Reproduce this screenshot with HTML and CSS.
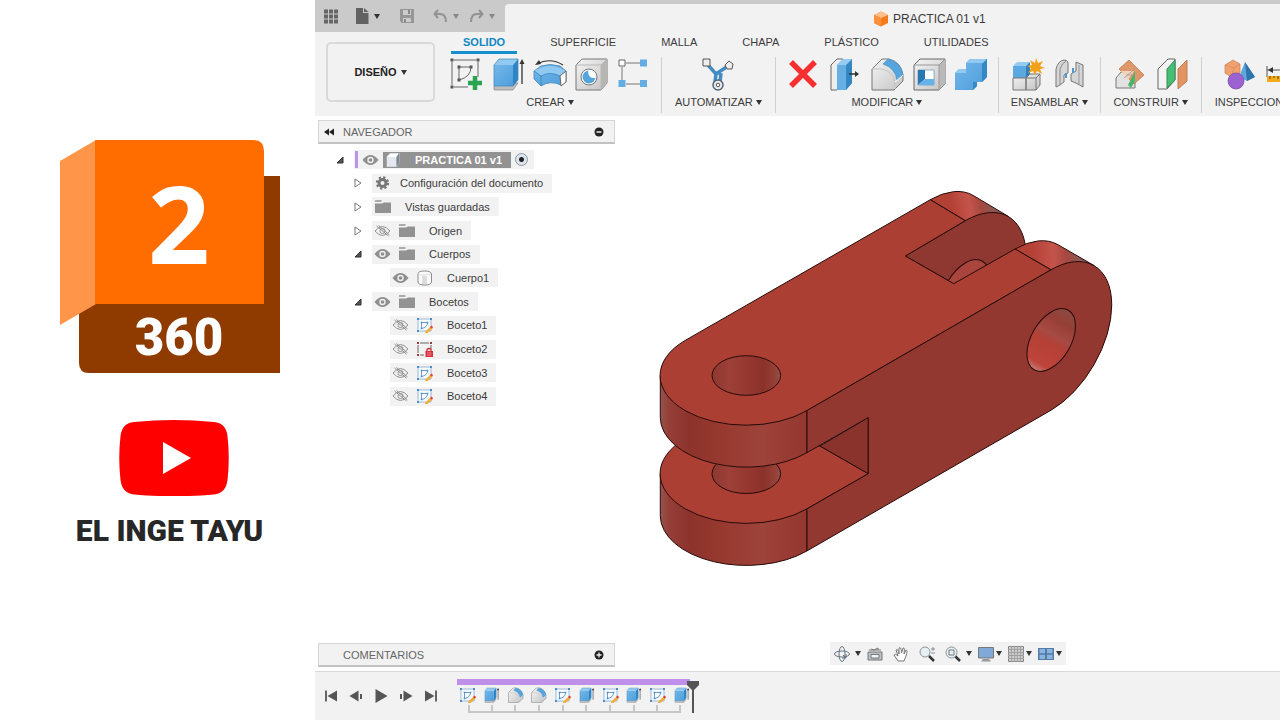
FILE: index.html
```html
<!DOCTYPE html>
<html lang="es">
<head>
<meta charset="utf-8">
<title>PRACTICA 01 v1</title>
<link rel="stylesheet" href="styles.css">
</head>
<body>
<svg class="defs" width="0" height="0" aria-hidden="true">
  <defs>
    <linearGradient id="blue" x1="0" y1="0" x2="1" y2="1"><stop offset="0" stop-color="#74b7ea"/><stop offset="1" stop-color="#4d9edb"/></linearGradient>
    <linearGradient id="grey" x1="0" y1="0" x2="1" y2="1"><stop offset="0" stop-color="#f4f4f4"/><stop offset="1" stop-color="#c4c4c4"/></linearGradient>
    <symbol id="eye" viewBox="0 0 16 16"><path d="M0 8Q8-2 16 8Q8 18 0 8Z" fill="#8f8f8f"/><circle cx="8" cy="8" r="3.2" fill="#efefef"/><circle cx="8" cy="8" r="1.8" fill="#8f8f8f"/></symbol>
    <symbol id="eye-off" viewBox="0 0 16 16"><path d="M.5 8Q8-1 15.500 8Q8 17 .5 8ZM2 3L14 13M4 2.500L15 12" fill="none" stroke="#929292"/><circle cx="8" cy="8" r="2.600" fill="none" stroke="#929292"/></symbol>
    <symbol id="folder" viewBox="0 0 17 16"><path d="M1 4.500H8L10 3.500H17V14H1Z" fill="#929292"/><path d="M1 2H7.500" stroke="#929292" stroke-width="1.500"/></symbol>
    <symbol id="gear" viewBox="0 0 16 16"><circle cx="8" cy="8" r="3.500" fill="none" stroke="#777" stroke-width="3"/><circle cx="8" cy="8" r="5.500" fill="none" stroke="#777" stroke-width="2.400" stroke-dasharray="2.200 2.120"/></symbol>
    <symbol id="sketch" viewBox="0 0 17 16"><path d="M2 2H15V14H2Z" fill="#f7fbff" stroke="#8aabc9" stroke-width=".8"/><path d="M5.500 5.500H11.500Q11.500 10.500 5.500 11.500Z" fill="none" stroke="#5f92bf" stroke-width=".9"/><path d="M1 1H3V3H1ZM14 1H16V3H14ZM1 13H3V15H1ZM4.700 4.700H6.300V6.300H4.700ZM10.700 4.700H12.300V6.300H10.700ZM4.700 10.700H6.300V12.300H4.700Z" fill="#438fcf"/><path d="M9.500 14.500L14.500 9.500L16.500 11.500L11.500 16L9 16Z" fill="#f2ae3b"/><path d="M14 10L15.500 8.500L17 10L16 11.700Z" fill="#d9403c"/></symbol>
    <symbol id="sketch-lock" viewBox="0 0 17 16"><path d="M4 2H13M15 4V8M2 4V12M4 14H8" fill="none" stroke="#666"/><path d="M1 1H3V3H1ZM14 1H16V3H14ZM1 13H3V15H1Z" fill="#9c3838"/><path d="M11 10V8.500Q13 6.500 15 8.500V10" fill="none" stroke="#c62f35" stroke-width="1.300"/><path d="M9.500 10H17V16H9.500Z" fill="#db303b"/><path d="M11 12H15.500M11 14H15.500" stroke="#f4a0a5" stroke-width=".7"/></symbol>
    <symbol id="body" viewBox="0 0 17 16"><path d="M2 4Q2 1 8.500 1Q15 1 15.500 4V12Q15 15 9 15Q2 15 2 12Z" fill="#fafafa" stroke="#8c8c8c"/><path d="M6 6H11V14H6Z" fill="#dcdcdc"/><path d="M2 4Q5 6 15 4" fill="none" stroke="#ddd"/></symbol>
    <symbol id="component" viewBox="0 0 16 16"><path d="M1 4.500L4.500 1H14V11L11 15H1Z" fill="#b9c2cc"/><path d="M1.500 5L4.500 1.500H13L11 5Z" fill="#fff"/><path d="M1.500 5H11V14.500H1.500Z" fill="#e3e9ef"/><path d="M11 5L13.500 1.500V11L11 14.500Z" fill="#7e8791"/></symbol>
    <symbol id="extrude" viewBox="0 0 34 34"><path d="M3 29L8 24L27 26L22 33H3Z" fill="#bdbdbd" stroke="#888" stroke-width=".7"/><path d="M3 8L8 2H27L22 8Z" fill="#91c9f1"/><path d="M3 8H22V29H3Z" fill="url(#blue)"/><path d="M22 8L27 2V23L22 29Z" fill="#2e85c4"/><path d="M3 8L8 2H27V23L22 29H3Z" fill="none" stroke="#3b86bd" stroke-width=".7"/><path d="M31 27V5" stroke="#333" stroke-width="1.300"/><path d="M28.500 7L31 2L33.500 7Z" fill="#333"/></symbol>
    <symbol id="fillet" viewBox="0 0 34 34"><path d="M2 12L12 2H19Q31 5 33 18V24L24 33H2Z" fill="url(#grey)" stroke="#777"/><path d="M2 12H11Q23 14 25 25V32" fill="none" stroke="#c4c4c4"/><path d="M13 7L18 2Q31 5 33 18L27 23Q25 11 13 7Z" fill="#55a5df" stroke="#438bc0" stroke-width=".6"/><path d="M25 25L33 18" stroke="#fff"/></symbol>
    <symbol id="closed" viewBox="0 0 10 12"><path d="M2 2V10L8 6Z" fill="#fff" stroke="#777"/></symbol>
    <symbol id="open" viewBox="0 0 10 12"><path d="M2 9L8 3V9Z" fill="#555" stroke="#333"/></symbol>
  </defs>
</svg>

<aside class="brand">
  <svg class="logo" viewBox="0 0 222 236" role="img" aria-label="2 360">
    <path d="M20 37H221V234H30Q20 234 20 224Z" fill="#8f3b00"/>
    <path d="M1 22L37 1V165L1 186Z" fill="#ff9548"/>
    <path d="M36 1H194Q205 1 205 12V165H36Z" fill="#ff6c00"/>
    <text class="logo-number" x="120" y="125" text-anchor="middle">2</text>
    <text class="logo-suffix" x="120" y="216" text-anchor="middle">360</text>
  </svg>
  <svg class="play-logo" viewBox="0 0 110 76" role="img" aria-label="Video">
    <path d="M15 2Q55-2 95 2Q107 3 108.500 16Q111 38 108.500 60Q107 73 95 74.500Q55 78 15 74.500Q3 73 1.500 60Q-1 38 1.500 16Q3 3 15 2Z" fill="#fe0000"/>
    <path d="M44 22L72 38L44 54Z" fill="#fff"/>
  </svg>
  <h1 class="channel">EL INGE TAYU</h1>
</aside>

<main class="app">
  <header class="topbar">
    <div class="quick">
      <button class="plain" aria-label="Panel de datos"><svg width="16" height="16" viewBox="0 0 16 16"><path d="M1 3.500H15M1 8.500H15M1 13.500H15" stroke="#666" stroke-width="4" stroke-dasharray="4 1"/></svg></button>
      <button class="plain with-caret file" aria-label="Archivo"><svg width="14" height="16" viewBox="0 0 14 16"><path d="M1 0H8V5H13.500V16H1ZM9 0L13.500 4H9Z" fill="#626262"/></svg><i class="caret"></i></button>
      <button class="plain save" aria-label="Guardar"><svg width="16" height="16" viewBox="0 0 16 16"><path d="M1 1H15V15H3L1 13Z" fill="#969696"/><path d="M4 2H12V7H4ZM4 10H12V14H4Z" fill="#ccc"/><path d="M9 2H11V6H9ZM5 11H7V14H5Z" fill="#888"/></svg></button>
      <button class="plain with-caret undo" aria-label="Deshacer"><svg width="15" height="16" viewBox="0 0 15 16"><path d="M5 2L1.500 6L5 10M2 6H7Q13 6 13 14" fill="none" stroke="#929292" stroke-width="2"/></svg><i class="caret dim"></i></button>
      <button class="plain with-caret" aria-label="Rehacer"><svg width="15" height="16" viewBox="0 0 15 16"><path d="M10 2L13.500 6L10 10M13 6H8Q2 6 2 14" fill="none" stroke="#929292" stroke-width="2"/></svg><i class="caret dim"></i></button>
    </div>
    <div class="doc-tab">
      <svg width="16" height="16" viewBox="0 0 16 16"><path d="M1 4L8 .5L15 4V12L8 15.500L1 12Z" fill="#f57a1c"/><path d="M1 4L8 .5L15 4L8 7Z" fill="#ffc08a"/><path d="M1 4L8 7V15.500L1 12Z" fill="#fb903d"/></svg>
      <span>PRACTICA 01 v1</span>
    </div>
  </header>

  <section class="ribbon">
    <button class="switcher">DISEÑO<i class="caret"></i></button>
    <div class="ribbon-main">
      <nav class="tabs">
        <button class="tab active">SOLIDO</button><button class="tab">SUPERFICIE</button><button class="tab">MALLA</button><button class="tab">CHAPA</button><button class="tab">PLÁSTICO</button><button class="tab">UTILIDADES</button>
      </nav>
      <div class="groups">
        <div class="group">
          <div class="tools">
            <button class="tool" aria-label="Crear boceto"><svg viewBox="0 0 34 34"><path d="M5 3H27M29 5V20M3 5V28M5 30H19" fill="none" stroke="#666"/><path d="M10 10H22Q22 20 10 23Z" fill="none" stroke="#666"/><path d="M1.500 1.500H4.500V4.500H1.500ZM27.500 1.500H30.500V4.500H27.500ZM1.500 28.500H4.500V31.500H1.500ZM8.500 8.500H11.500V11.500H8.500ZM20.500 8.500H23.500V11.500H20.500ZM8.500 21.500H11.500V24.500H8.500Z" fill="#555"/><path d="M26 19V33M19 26H33" stroke="#27a550" stroke-width="4.500"/></svg></button>
            <button class="tool" aria-label="Extruir"><svg><use href="#extrude"/></svg></button>
            <button class="tool" aria-label="Revolución"><svg viewBox="0 0 34 34"><path d="M1 14L8 9Q17 6 27 9L33 14V25L28 28Q17 23 8 29L1 22Z" fill="url(#blue)" stroke="#4587b8" stroke-width=".8"/><path d="M1 14L8 19Q17 14 27 19L33 14Q17 4 1 14Z" fill="#8fc8f0"/><path d="M8 19V29M1 14L8 19Q17 14 27 19" fill="none" stroke="#3984bd" stroke-width=".8"/><path d="M27 19L33 14V25L28 29Z" fill="#fff" stroke="#666"/><path d="M4 7Q17 0 30 8" fill="none" stroke="#333" stroke-width="1.200"/><path d="M2 8L6 3L8 7Z" fill="#333"/></svg></button>
            <button class="tool" aria-label="Agujero"><svg viewBox="0 0 34 34"><path d="M1 8L7 2H32V26L26 33H1Z" fill="url(#grey)" stroke="#777"/><path d="M26 8L32 2V26L26 33Z" fill="#b7b5b3"/><path d="M1 8H26V33M26 8L32 2" fill="none" stroke="#b8b8b8"/><circle cx="14" cy="20" r="8" fill="#fff" stroke="#777"/><circle cx="14" cy="20" r="6.500" fill="#55a4dc"/><path d="M13 13.500A6.500 6.500 0 0 1 20.500 21Q13 22 13 13.500Z" fill="#fff"/></svg></button>
            <button class="tool" aria-label="Patrón"><svg viewBox="0 0 34 34"><path d="M9 6H23M9 27H23M5 10V23" fill="none" stroke="#777"/><path d="M2 3H8V9H2Z" fill="#fff" stroke="#666"/><path d="M23 2.500H30V9.500H23ZM1.500 23H8.500V30H1.500ZM23 23H30V30H23Z" fill="#64ade3"/></svg></button>
          </div>
          <button class="group-label">CREAR<i class="caret"></i></button>
        </div>
        <div class="group wide">
          <div class="tools">
            <button class="tool" aria-label="Automatizar"><svg viewBox="0 0 34 34"><path d="M7 8L15 17L27 9M15 17L14 25M20 16L19 25M14 16H20" fill="none" stroke="#438cc3" stroke-width="3.500"/><path d="M2 2H9V9H2ZM24 8L28 4L32 7L31 12L26 12Z" fill="#eee" stroke="#555"/><circle cx="17" cy="28" r="5" fill="#eee" stroke="#526779" stroke-width="1.500"/><circle cx="17" cy="28" r="1.800" fill="#fff" stroke="#555"/></svg></button>
          </div>
          <button class="group-label">AUTOMATIZAR<i class="caret"></i></button>
        </div>
        <div class="group">
          <div class="tools">
            <button class="tool" aria-label="Suprimir"><svg viewBox="0 0 34 34"><path d="M5 5L29 29M29 5L5 29" stroke="#f62f31" stroke-width="5.500"/></svg></button>
            <button class="tool" aria-label="Pulsar o tirar"><svg viewBox="0 0 34 34"><path d="M3 8L9 2H15V27L9 33H3Z" fill="#eee" stroke="#666"/><path d="M9 8L15 2H24V26L18 33H9Z" fill="#65afe4"/><path d="M18 8L24 2V26L18 33Z" fill="#3487c1"/><path d="M9 8L15 2H24L18 8Z" fill="#96ccf1"/><path d="M21 17H30" stroke="#333" stroke-width="1.500"/><path d="M27 14L31 17L27 20Z" fill="#333"/></svg></button>
            <button class="tool" aria-label="Empalme"><svg><use href="#fillet"/></svg></button>
            <button class="tool" aria-label="Vaciado"><svg viewBox="0 0 34 34"><path d="M2 8L8 2H33V27L27 33H2Z" fill="url(#grey)" stroke="#666"/><path d="M27 8L33 2V27L27 33Z" fill="#b9b9b9"/><path d="M2 8H27V33M27 8L33 2" fill="none" stroke="#999"/><path d="M6 13H22V28H6Z" fill="#fff" stroke="#5088ad" stroke-width=".6"/><path d="M6 13H13V22L6 28Z" fill="#2877b1"/><path d="M6 28L13 22H22V28Z" fill="#65b3ea"/></svg></button>
            <button class="tool" aria-label="Combinar"><svg viewBox="0 0 34 34"><path d="M1 16L5 12H12V6L16 2H33V20L28 25H23V29L19 33H1Z" fill="url(#blue)"/><path d="M12 6L16 2H33L29 6ZM1 16L5 12H12V16Z" fill="#91caf1"/><path d="M29 6L33 2V20L28 25V7ZM19 25H23V29L19 33Z" fill="#3488c5"/></svg></button>
          </div>
          <button class="group-label">MODIFICAR<i class="caret"></i></button>
        </div>
        <div class="group mid">
          <div class="tools">
            <button class="tool" aria-label="Nuevo componente"><svg viewBox="0 0 34 34"><path d="M2 9L6 5H19L15 9Z" fill="#93cdf3"/><path d="M2 9H15V21H2Z" fill="#5ba9e0"/><path d="M15 9L19 5V17L15 21Z" fill="#2d80bd"/><path d="M2 21H15V33H2ZM15 21L19 17H29V28L25 33H15Z" fill="url(#grey)" stroke="#777"/><path d="M15 21H25V33M25 21L29 17" fill="none" stroke="#777"/><path d="M25 1L27 6L32 4L29 9L34 11L29 12L31 17L26 14L24 18L22 14L17 16L20 11L16 9L21 8L19 3L24 6Z" fill="#f3a11d"/></svg></button>
            <button class="tool" aria-label="Unión"><svg viewBox="0 0 34 34"><path d="M3 30V12Q5 4 11 3Q16 3 15 9V16L11 18V25L7 28Z" fill="#d6d6d6" stroke="#777"/><path d="M7 28V12Q9 6 13 4" fill="none" stroke="#888"/><path d="M18 17L23 14V5L30 8V30L23 26L18 24Z" fill="#d5d5d5" stroke="#777"/><path d="M26 8V27" stroke="#999"/><path d="M13 16V21M20 11V16" stroke="#4a9bd6" stroke-width="2"/></svg></button>
          </div>
          <button class="group-label">ENSAMBLAR<i class="caret"></i></button>
        </div>
        <div class="group mid">
          <div class="tools">
            <button class="tool" aria-label="Plano de desfase"><svg viewBox="0 0 34 34"><path d="M3 21L8 15H17L22 21V31H3Z" fill="#e2e2e2" stroke="#777"/><path d="M16 3L31 18L21 27L6 12Z" fill="#df986a" stroke="#c57847" stroke-width=".8"/><path d="M8 14H21L15 23Z" fill="#f4d3bc"/><path d="M15 28L22 14V24L18 31Z" fill="#48b66f"/><path d="M14 18H22M11 21L23 11" stroke="#999" stroke-width=".8"/></svg></button>
            <button class="tool" aria-label="Plano medio"><svg viewBox="0 0 34 34"><path d="M3 12L13 2H20V23L12 32H3Z" fill="#f3f3f3" stroke="#666"/><path d="M12 12L20 3V23L12 31Z" fill="#45bf73" stroke="#348b57"/><path d="M23 12L32 3V24L23 32Z" fill="#e49460" stroke="#b97e5b"/></svg></button>
          </div>
          <button class="group-label">CONSTRUIR<i class="caret"></i></button>
        </div>
        <div class="group wide last">
          <div class="tools">
            <button class="tool" aria-label="Inspeccionar"><svg viewBox="0 0 34 34"><path d="M2 8L10 3L17 7V16L8 20L2 16Z" fill="#f0a16e" stroke="#cb8056" stroke-width=".7"/><path d="M2 8L11 11L17 7M11 11L8 20" fill="none" stroke="#d18a61" stroke-width=".7"/><path d="M22 5L32 20L24 24L16 20Z" fill="#60a8dc"/><path d="M22 5L32 20L24 24Z" fill="#2f75ac"/><circle cx="13" cy="24" r="8" fill="#9d62d2" stroke="#7549a0" stroke-width=".7"/></svg></button>
            <button class="tool" aria-label="Medir"><svg viewBox="0 0 34 34"><path d="M2 9V20M2 13H30" stroke="#555" fill="none"/><path d="M3 13L8 10V16Z" fill="#333"/><path d="M2 19H33V25H2Z" fill="#f3ab1a"/><path d="M5 19V22M9 19V21M13 19V22M17 19V21" stroke="#59400c"/></svg></button>
          </div>
          <button class="group-label">INSPECCIONAR<i class="caret"></i></button>
        </div>
      </div>
    </div>
  </section>

  <section class="workspace">
    <div class="side">
      <div class="panel-head">
        <button class="plain" aria-label="Contraer"><svg width="12" height="10" viewBox="0 0 12 10"><path d="M6 1.500V8.500L1 5ZM11 1.500V8.500L6 5Z" fill="#222"/></svg></button>
        <h2>NAVEGADOR</h2>
        <button class="plain" aria-label="Ocultar"><svg width="10" height="10" viewBox="0 0 10 10"><circle cx="5" cy="5" r="4.500" fill="#222"/><path d="M2.500 5H7.500" stroke="#eee" stroke-width="1.500"/></svg></button>
      </div>
      <ul class="tree">
        <li class="row root"><svg class="twist"><use href="#open"/></svg><span class="pill"><i class="bar"></i><svg class="ic"><use href="#eye"/></svg><b class="selected"><svg class="ic"><use href="#component"/></svg>PRACTICA 01 v1</b><input type="radio" checked aria-label="Activar PRACTICA 01 v1"></span></li>
        <li class="row"><svg class="twist"><use href="#closed"/></svg><span class="pill"><svg class="ic"><use href="#gear"/></svg><span class="setting">Configuración del documento</span></span></li>
        <li class="row"><svg class="twist"><use href="#closed"/></svg><span class="pill"><svg class="ic"><use href="#folder"/></svg><span class="name">Vistas guardadas</span></span></li>
        <li class="row"><svg class="twist"><use href="#closed"/></svg><span class="pill"><svg class="ic"><use href="#eye-off"/></svg><svg class="ic"><use href="#folder"/></svg><span class="name">Origen</span></span></li>
        <li class="row"><svg class="twist"><use href="#open"/></svg><span class="pill"><svg class="ic"><use href="#eye"/></svg><svg class="ic"><use href="#folder"/></svg><span class="name">Cuerpos</span></span></li>
        <li class="row child"><span class="pill"><svg class="ic"><use href="#eye"/></svg><svg class="ic"><use href="#body"/></svg><span class="name">Cuerpo1</span></span></li>
        <li class="row"><svg class="twist"><use href="#open"/></svg><span class="pill"><svg class="ic"><use href="#eye"/></svg><svg class="ic"><use href="#folder"/></svg><span class="name">Bocetos</span></span></li>
        <li class="row child"><span class="pill"><svg class="ic"><use href="#eye-off"/></svg><svg class="ic"><use href="#sketch"/></svg><span class="name">Boceto1</span></span></li>
        <li class="row child"><span class="pill"><svg class="ic"><use href="#eye-off"/></svg><svg class="ic"><use href="#sketch-lock"/></svg><span class="name">Boceto2</span></span></li>
        <li class="row child"><span class="pill"><svg class="ic"><use href="#eye-off"/></svg><svg class="ic"><use href="#sketch"/></svg><span class="name">Boceto3</span></span></li>
        <li class="row child"><span class="pill"><svg class="ic"><use href="#eye-off"/></svg><svg class="ic"><use href="#sketch"/></svg><span class="name">Boceto4</span></span></li>
      </ul>
      <div class="panel-head comments">
        <h2>COMENTARIOS</h2>
        <button class="plain" aria-label="Mostrar comentarios"><svg width="10" height="10" viewBox="0 0 10 10"><circle cx="5" cy="5" r="4.500" fill="#222"/><path d="M2.500 5H7.500M5 2.500V7.500" stroke="#eee" stroke-width="1.300"/></svg></button>
      </div>
    </div>

    <div class="viewport">
      <svg class="model" viewBox="656 186 460 384" role="img" aria-label="Modelo 3D">
        <defs>
          <linearGradient id="round" x1="660" y1="0" x2="807" y2="0" gradientUnits="userSpaceOnUse"><stop offset="0" stop-color="#93564f"/><stop offset=".06" stop-color="#953f38"/><stop offset=".2" stop-color="#8c332c"/><stop offset=".42" stop-color="#97392f"/><stop offset=".7" stop-color="#9e433b"/><stop offset=".85" stop-color="#993c34"/><stop offset="1" stop-color="#93372f"/></linearGradient>
          <linearGradient id="bore" x1="712" y1="0" x2="781" y2="0" gradientUnits="userSpaceOnUse"><stop offset="0" stop-color="#8d3730"/><stop offset=".25" stop-color="#9d4038"/><stop offset=".5" stop-color="#963830"/><stop offset=".75" stop-color="#8b322b"/><stop offset=".93" stop-color="#964239"/><stop offset="1" stop-color="#8c5a53"/></linearGradient>
          <linearGradient id="earBack" x1="953" y1="213" x2="991" y2="206" gradientUnits="userSpaceOnUse"><stop offset="0" stop-color="#b44136"/><stop offset=".45" stop-color="#c4544b"/><stop offset=".75" stop-color="#a64740"/><stop offset="1" stop-color="#8d5852"/></linearGradient>
          <linearGradient id="earFront" x1="1033" y1="259" x2="1078" y2="256" gradientUnits="userSpaceOnUse"><stop offset="0" stop-color="#b44136"/><stop offset=".45" stop-color="#c4544b"/><stop offset=".75" stop-color="#a64740"/><stop offset="1" stop-color="#8d5852"/></linearGradient>
          <linearGradient id="sideBore" x1="1" y1="0" x2="0" y2="0"><stop offset="0" stop-color="#8b4a43"/><stop offset=".2" stop-color="#963f37"/><stop offset=".42" stop-color="#a64a43"/><stop offset=".55" stop-color="#b44036"/><stop offset=".88" stop-color="#be443a"/><stop offset="1" stop-color="#c57b73"/></linearGradient>
          <clipPath id="underPlate"><path d="M650 417.500H660A86 49.700 0 0 0 832 417.500H850V560H650Z"/></clipPath>
          <clipPath id="innerEar"><path d="M905 256L953.700 283.700L1015 249V200H905Z"/></clipPath>
        </defs>
        <g stroke="#260b09" stroke-width="1" stroke-linejoin="round">
          <path d="M660.300 473.700V515.700A86 49.700 0 0 0 807 550.900V508.800L746 440Z" fill="url(#round)"/>
          <path d="M868.300 473.700L807 508.800A85 49.100 0 1 1 685.200 438.600L820 446Z" fill="#ac3f34"/>
          <g clip-path="url(#underPlate)"><ellipse cx="746.300" cy="473.700" rx="34.300" ry="19.800" fill="url(#bore)"/></g>
          <path d="M868.300 417.500V473.700L820 446Z" fill="#8a332c"/>
          <path d="M660.300 375.500V417.500A86 49.700 0 0 0 807 452.600V410.600L746 375Z" fill="url(#round)"/>
          <path d="M930.300 199.700A86 49.700 -60 0 1 973.300 195.500L1008.300 216.400L1000 235L965.300 220.700Z" fill="url(#earBack)"/>
          <path d="M905.300 256L965.300 220.700A86 49.700 -60 0 1 1026.100 255.900L1015 262L953.700 283.700Z" fill="#8f3831"/>
          <g clip-path="url(#innerEar)"><ellipse cx="965.300" cy="291" rx="34.300" ry="19.800" transform="rotate(-60 965.300 291)" fill="#a9453c"/></g>
          <path d="M1015 249A86 49.700 -60 0 1 1058 244.700L1094 265.500L1080 280L1051 269.800Z" fill="url(#earFront)"/>
          <path d="M685.200 340.400L930.300 199.700L965.300 220.700L905.300 256L953.700 283.700L1015 249L1051 269.800L807 410.600A85 49.100 0 1 1 685.200 340.400Z" fill="#ac3f34"/>
          <path d="M807 410.600L1051 269.800A85 49.100 -60 0 1 1051 410.200L807 550.900V508.800L868.300 473.700V417.500L807 452.600Z" fill="#933830"/>
          <ellipse cx="746.300" cy="375.500" rx="34.300" ry="19.800" fill="url(#bore)"/>
          <ellipse cx="1051.200" cy="340" rx="34.300" ry="19.800" transform="rotate(-60 1051.200 340)" fill="url(#sideBore)"/>
        </g>
      </svg>
      <div class="navbar">
        <button class="plain with-caret far" aria-label="Orbitar"><svg width="16" height="16" viewBox="0 0 16 16"><g fill="none" stroke="#687684"><ellipse cx="8" cy="8" rx="7.500" ry="3"/><ellipse cx="8" cy="8" rx="3" ry="7.500"/><path d="M9 9L12 12M12 8V12H8"/></g></svg><i class="caret"></i></button>
        <button class="plain" aria-label="Mirar a"><svg width="16" height="16" viewBox="0 0 16 16"><path d="M1 6H15V14H1Z" fill="#bbc2c8" stroke="#777"/><path d="M4 8.500H12V12H4Z" fill="#f5f5f5" stroke="#777"/><path d="M2 4H14M4 3L7 4L11 2V4" fill="none" stroke="#777"/></svg></button>
        <button class="plain" aria-label="Encuadre"><svg width="16" height="16" viewBox="0 0 16 16"><path d="M5 15L1 9Q2 7 5 10L3 4Q5 2 6 8L6 2Q8 0 8.500 7L10 2Q12 1 11 8L13 4Q15 4 13 10L11 15Z" fill="#fff" stroke="#777"/></svg></button>
        <button class="plain" aria-label="Zoom"><svg width="16" height="16" viewBox="0 0 16 16"><circle cx="6" cy="6" r="5" fill="#e8f0f4" stroke="#87939b"/><path d="M10 10L15 15" stroke="#333" stroke-width="2.500"/><path d="M12 3H16M14 1V5M12 7H16" stroke="#777" stroke-width=".8"/></svg></button>
        <button class="plain with-caret far" aria-label="Ajustar"><svg width="16" height="16" viewBox="0 0 16 16"><circle cx="6.500" cy="6.500" r="5.500" fill="#e8f0f4" stroke="#87939b"/><path d="M4 4H9V9H4Z" fill="none" stroke="#777"/><path d="M10.500 10.500L15 15" stroke="#333" stroke-width="2.500"/></svg><i class="caret"></i></button>
        <button class="plain with-caret" aria-label="Visualización"><svg width="16" height="16" viewBox="0 0 16 16"><path d="M.5 1.500H15.500V12H.5Z" fill="#7fa9d6" stroke="#777"/><path d="M5 13H11L13 15.500H3Z" fill="#999"/></svg><i class="caret"></i></button>
        <button class="plain with-caret" aria-label="Rejilla"><svg width="16" height="16" viewBox="0 0 16 16"><path d="M.5 .5H15.500V15.500H.5Z" fill="#ccc" stroke="#888"/><path d="M3.500 0V16M6.500 0V16M9.500 0V16M12.500 0V16M0 3.500H16M0 6.500H16M0 9.500H16M0 12.500H16" stroke="#a2a2a2"/></svg><i class="caret"></i></button>
        <button class="plain with-caret" aria-label="Ventanas gráficas"><svg width="16" height="16" viewBox="0 0 16 16"><path d="M0 2H16V14H0Z" fill="#557aa3"/><path d="M1.500 3H7V7.300H1.500ZM9 3H14.500V7.300H9ZM1.500 8.800H7V13H1.500ZM9 8.800H14.500V13H9Z" fill="#88b4df"/></svg><i class="caret"></i></button>
      </div>
    </div>
  </section>

  <footer class="timeline">
    <div class="playback">
      <button class="plain" aria-label="Inicio"><svg width="14" height="14" viewBox="0 0 14 14"><path d="M2 1.500V12.500" stroke="#555" stroke-width="1.800"/><path d="M13 1.500V12.500L3.500 7Z" fill="#555"/></svg></button>
      <button class="plain" aria-label="Anterior"><svg width="14" height="14" viewBox="0 0 14 14"><path d="M9.500 1.500V12.500L.5 7Z" fill="#555"/><path d="M12 5V10" stroke="#555" stroke-width="2"/></svg></button>
      <button class="plain" aria-label="Reproducir"><svg width="14" height="14" viewBox="0 0 14 14"><path d="M1.500 0V14L13.500 7Z" fill="#555"/></svg></button>
      <button class="plain" aria-label="Siguiente"><svg width="14" height="14" viewBox="0 0 14 14"><path d="M4.500 1.500V12.500L13.500 7Z" fill="#555"/><path d="M2 5V10" stroke="#555" stroke-width="2"/></svg></button>
      <button class="plain" aria-label="Final"><svg width="14" height="14" viewBox="0 0 14 14"><path d="M12 1.500V12.500" stroke="#555" stroke-width="1.800"/><path d="M1 1.500V12.500L10.500 7Z" fill="#555"/></svg></button>
    </div>
    <div class="track">
      <div class="span"></div>
      <div class="steps">
        <button class="step" aria-label="Boceto1"><svg><use href="#sketch"/></svg></button>
        <button class="step" aria-label="Extrusión1"><svg><use href="#extrude"/></svg></button>
        <button class="step" aria-label="Empalme1"><svg><use href="#fillet"/></svg></button>
        <button class="step" aria-label="Empalme2"><svg><use href="#fillet"/></svg></button>
        <button class="step" aria-label="Boceto2"><svg><use href="#sketch"/></svg></button>
        <button class="step" aria-label="Extrusión2"><svg><use href="#extrude"/></svg></button>
        <button class="step" aria-label="Boceto3"><svg><use href="#sketch"/></svg></button>
        <button class="step" aria-label="Extrusión3"><svg><use href="#extrude"/></svg></button>
        <button class="step" aria-label="Boceto4"><svg><use href="#sketch"/></svg></button>
        <button class="step" aria-label="Extrusión4"><svg><use href="#extrude"/></svg></button>
      </div>
      <svg class="marker" width="12" height="34" viewBox="0 0 12 34" aria-hidden="true"><path d="M0 1H12V5L7 10V33H5V10L0 5Z" fill="#555"/></svg>
    </div>
  </footer>
</main>
</body>
</html>
```
FILE: styles.css
```css
* { box-sizing: border-box; }
body {
  margin: 0;
  min-height: 100vh;
  display: flex;
  overflow: hidden;
  background: #fff;
  color: #3c3c3c;
  font: 11px/14px "Liberation Sans", Arial, sans-serif;
}
button {
  border: 0;
  padding: 0;
  background: none;
  color: inherit;
  font: inherit;
}
svg { display: block; flex: none; }
h1, h2 { margin: 0; font-weight: 400; }
.defs { position: absolute; }
.plain { display: flex; align-items: center; flex: none; }
.with-caret { gap: 5px; }
.caret {
  display: inline-block;
  flex: none;
  border: 3px solid transparent;
  border-top: 5px solid #333;
  border-bottom: 0;
}
.caret.dim { border-top-color: #888; }

/* Brand column */
.brand {
  flex: 0 0 315px;
  display: flex;
  flex-direction: column;
  align-items: center;
  padding: 139px 0 0 24px;
}
.logo { width: 222px; height: 236px; }
.logo-number { font: 700 108px "Open Sans", sans-serif; fill: #fff; }
.logo-suffix { font: 900 51px Roboto, sans-serif; fill: #fff; }
.play-logo { width: 110px; height: 76px; margin: 45px 0 0 8px; }
.channel {
  margin-top: 16px;
  color: #272727;
  font: 900 30px/38px Roboto, sans-serif;
  white-space: nowrap;
}

.app {
  flex: 1;
  min-width: 0;
  display: flex;
  flex-direction: column;
  overflow: hidden;
}

/* Title bar */
.topbar { display: flex; height: 32px; background: #cacaca; }
.quick {
  flex: 0 0 190px;
  display: flex;
  align-items: center;
  padding-left: 8px;
}
.file { margin-left: 16px; }
.save { margin-left: 19px; }
.undo { margin: 0 10px 0 18px; }
.doc-tab {
  flex: 1;
  display: flex;
  align-items: center;
  gap: 4px;
  margin-top: 4px;
  padding: 2px 0 0 368px;
  border-radius: 4px 0 0;
  background: #f2f2f2;
  font-size: 12px;
}

/* Ribbon */
.ribbon { display: flex; height: 84px; background: #f2f2f2; }
.switcher {
  flex: none;
  display: flex;
  align-items: center;
  justify-content: center;
  gap: 4px;
  width: 109px;
  height: 60px;
  margin: 10px 4px 0 11px;
  border: 2px solid #d9d9d9;
  border-radius: 5px;
  color: #222;
  font-weight: 700;
}
.ribbon-main { flex: none; }
.tabs { display: flex; gap: 21px; padding-left: 12px; }
.tab {
  height: 22px;
  padding: 0 12px;
  border-bottom: 3px solid transparent;
}
.tab.active { border-color: #1490cc; color: #1287c5; font-weight: 700; }
.groups { display: flex; padding-top: 3px; }
.group {
  padding: 0 10px;
  border-right: 1px solid #d0d0d0;
  text-align: center;
}
.group.wide { padding: 0 13px; }
.group.mid { padding: 0 12px; }
.group.last { border: 0; }
.tools { display: flex; justify-content: center; gap: 8px; }
.tool svg { width: 34px; height: 34px; }
.group-label {
  display: flex;
  align-items: center;
  gap: 3px;
  height: 22px;
  margin: 0 auto;
}

/* Workspace */
.workspace { flex: 1; display: flex; min-height: 0; }
.side {
  flex: 0 0 300px;
  display: flex;
  flex-direction: column;
  padding: 4px 0 4px 3px;
}
.panel-head {
  display: flex;
  align-items: center;
  gap: 8px;
  height: 24px;
  padding: 0 10px 0 4px;
  border: 1px solid #d5d5d5;
  border-bottom: 2px solid #c2c2c2;
  background: #f2f2f2;
}
.panel-head h2 { flex: 1; color: #666; font-size: 11px; }
.comments { margin-top: auto; padding-left: 24px; }
.tree {
  display: grid;
  align-content: space-between;
  height: 256px;
  margin: 6px 0 0;
  padding: 0;
  list-style: none;
}
.row { display: flex; align-items: center; padding-left: 35px; }
.row.root { padding-left: 17px; }
.row.child { padding-left: 72px; }
.twist { width: 10px; height: 12px; margin-right: 9px; }
.pill {
  display: flex;
  align-items: center;
  gap: 7px;
  height: 19px;
  padding: 0 9px 0 2px;
  background: #f2f2f2;
  white-space: nowrap;
}
.ic { width: 17px; height: 16px; }
.name { margin-left: 7px; }
.setting { margin-left: 2px; }
.root .pill { gap: 4px; padding: 0 6px 0 1px; }
.bar { width: 3px; height: 17px; background: #b994e8; }
.selected {
  display: flex;
  align-items: center;
  gap: 13px;
  height: 16px;
  padding: 0 9px 0 2px;
  background: #929292;
  color: #fff;
}
.root input {
  appearance: none;
  width: 13px;
  height: 13px;
  margin: 0;
  border: 1px solid #8b96a5;
  border-radius: 50%;
  background: radial-gradient(circle, #222 0 2px, #dce4ee 3px);
}

.viewport {
  flex: 1;
  min-width: 0;
  display: flex;
  flex-direction: column;
  align-items: center;
  justify-content: space-between;
  padding: 70px 0 6px;
}
.model { align-self: flex-start; width: 460px; height: 384px; margin-left: 41px; }
.navbar {
  display: flex;
  align-items: center;
  gap: 10px;
  height: 23px;
  padding: 0 4px;
  background: #f2f2f2;
}
.navbar .with-caret { gap: 2px; margin-right: -4px; }
.navbar .far { gap: 5px; }
.navbar .with-caret:last-child { margin-right: 0; }

/* Timeline */
.timeline {
  display: flex;
  height: 49px;
  border-top: 1px solid #d9d9d9;
  background: #f2f2f2;
}
.playback {
  display: flex;
  align-items: center;
  gap: 11px;
  padding-left: 9px;
}
.track { position: relative; width: 237px; margin: 7px 0 0 18px; }
.span { height: 6px; margin: 0 3px 0 1px; background: #bf90e9; }
.steps { display: grid; grid-template-columns: repeat(10, 1fr); }
.step {
  display: flex;
  flex-direction: column;
  align-items: center;
  padding-top: 2px;
}
.step svg { width: 17px; height: 16px; }
.step::after {
  content: "";
  width: 100%;
  height: 6px;
  margin-top: 2px;
  border-bottom: 2px solid #c6c6c6;
  background: linear-gradient(#c6c6c6, #c6c6c6) center / 2px 100% no-repeat;
}
.step:first-child::after { width: 50%; align-self: flex-end; background-position: left; }
.step:last-child::after { width: 50%; align-self: flex-start; background-position: right; }
.marker { position: absolute; top: 1px; right: -6px; }
```
